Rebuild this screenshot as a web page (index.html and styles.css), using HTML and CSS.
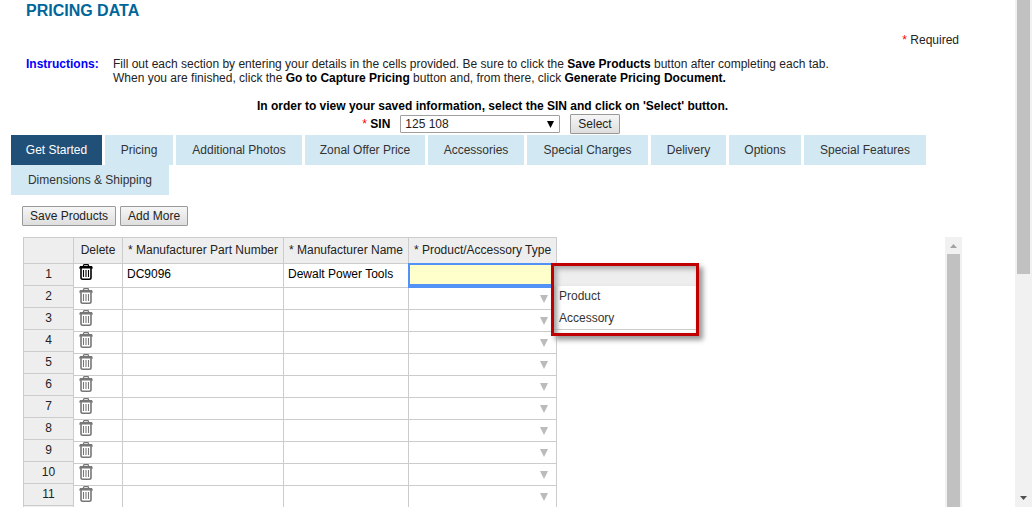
FILE: index.html
```html
<!DOCTYPE html>
<html lang="en">
<head>
<meta charset="utf-8">
<title>Pricing Data</title>
<link rel="stylesheet" href="styles.css">
</head>
<body>
<svg class="sprite" aria-hidden="true">
  <symbol id="trash" viewBox="0 0 14 16">
    <path d="M4.500 3V1.500Q4.500.7 5.300.7h3.400q.8 0 .8.8V3" fill="none" stroke="currentColor" stroke-width="1.300"/>
    <path d="M1 2h12l1 2.500H0z" fill="currentColor"/>
    <path d="M2 4v9.500q0 1.700 1.700 1.700h6.600q1.700 0 1.700-1.700V4" fill="none" stroke="currentColor" stroke-width="1.600"/>
    <path d="M4.500 6v7M7 6v7M9.500 6v7" stroke="currentColor" stroke-width="1.100"/>
  </symbol>
</svg>
<div class="page">
  <main class="main">
    <header class="intro">
      <h1 class="title">PRICING DATA</h1>
      <p class="required"><span class="star">*</span> Required</p>
      <div class="instructions">
        <strong class="instructions-label">Instructions:</strong>
        <p class="instructions-text">Fill out each section by entering your details in the cells provided. Be sure to click the <b>Save Products</b> button after completing each tab.<br>When you are finished, click the <b>Go to Capture Pricing</b> button and, from there, click <b>Generate Pricing Document.</b></p>
      </div>
      <p class="hint">In order to view your saved information, select the SIN and click on 'Select' button.</p>
      <form class="sin">
        <label class="sin-label" for="sin"><span class="star">*</span> SIN</label>
        <span class="select-wrap">
          <select class="select" id="sin"><option>125 108</option></select>
          <svg class="select-arrow" viewBox="0 0 7 7" aria-hidden="true"><path d="M0 0h7L3.5 7z"/></svg>
        </span>
        <button class="button" type="button">Select</button>
      </form>
    </header>
    <nav class="tabs">
      <a class="tab tab-active" href="#started">Get Started</a>
      <a class="tab" href="#pricing">Pricing</a>
      <a class="tab" href="#photos">Additional Photos</a>
      <a class="tab" href="#zonal">Zonal Offer Price</a>
      <a class="tab" href="#accessories">Accessories</a>
      <a class="tab" href="#charges">Special Charges</a>
      <a class="tab" href="#delivery">Delivery</a>
      <a class="tab" href="#options">Options</a>
      <a class="tab" href="#features">Special Features</a>
      <a class="tab" href="#shipping">Dimensions &amp; Shipping</a>
    </nav>
    <div class="actions">
      <button class="button" type="button">Save Products</button>
      <button class="button" type="button">Add More</button>
    </div>
    <section class="sheet">
      <table class="grid numbers">
        <thead><tr><th></th></tr></thead>
        <tbody id="numbers"></tbody>
      </table>
      <table class="grid data">
        <colgroup><col class="col-delete"><col class="col-part"><col class="col-name"><col class="col-type"></colgroup>
        <thead><tr><th>Delete</th><th>* Manufacturer Part Number</th><th>* Manufacturer Name</th><th>* Product/Accessory Type</th></tr></thead>
        <tbody id="rows">
          <tr class="first">
            <td><button class="trash trash-on" type="button" aria-label="Delete row 1"><svg class="icon"><use href="#trash"/></svg></button></td>
            <td>DC9096</td>
            <td>Dewalt Power Tools</td>
            <td class="type-cell">
              <input class="editor" type="text" aria-label="Product/Accessory Type">
              <ul class="menu">
                <li class="menu-item menu-current"></li>
                <li class="menu-item">Product</li>
                <li class="menu-item">Accessory</li>
              </ul>
            </td>
          </tr>
        </tbody>
      </table>
      <div class="scrollbar sheet-scroll" aria-hidden="true">
        <svg class="scroll-arrow arrow-light" viewBox="0 0 17 17"><path d="M5 11h7L8.500 7z"/></svg>
        <div class="thumb"></div>
      </div>
    </section>
  </main>
  <div class="scrollbar page-scroll" aria-hidden="true">
    <div class="thumb"></div>
    <div class="track"></div>
    <svg class="scroll-arrow arrow-dark" viewBox="0 0 17 17"><path d="M5 6h7L8.500 10z"/></svg>
  </div>
</div>
<script src="grid.js"></script>
</body>
</html>
```
FILE: styles.css
```css
* {
  box-sizing: border-box;
}

body {
  margin: 0;
  background: #fff;
  color: #222;
  font: 12px/14px "Liberation Sans", Arial, sans-serif;
}

p, h1, ul {
  margin: 0;
  padding: 0;
}

button, input, select {
  font: inherit;
  color: #222;
}

.sprite {
  display: none;
}

.page {
  display: flex;
  height: 100vh;
  overflow: hidden;
}

.main {
  flex: 1;
  min-width: 0;
  display: flex;
  flex-direction: column;
}

.intro {
  padding: 2px 56px 1px 26px;
}

.title {
  color: #069;
  font-size: 16px;
  line-height: 18px;
}

.required {
  margin-top: 13px;
  text-align: right;
}

.star {
  color: #f00;
  font-weight: normal;
}

.instructions {
  display: flex;
  margin-top: 10px;
}

.instructions-label {
  width: 87px;
  flex: none;
  color: #00f;
}

.instructions b,
.hint {
  color: #000;
}

.hint {
  margin-top: 14px;
  font-weight: bold;
  text-align: center;
}

.sin {
  display: flex;
  justify-content: center;
  align-items: center;
  gap: 10px;
  margin-top: 1px;
  padding-right: 3px;
}

.sin-label {
  color: #000;
  font-weight: bold;
}

.select-wrap {
  position: relative;
  display: flex;
}

.select {
  appearance: none;
  width: 160px;
  height: 18px;
  padding: 0 4px;
  border: 1px solid #a0a0a0;
  border-radius: 1px;
  background: #fff;
}

.select-arrow {
  position: absolute;
  top: 6px;
  right: 6px;
  width: 7px;
  height: 7px;
  pointer-events: none;
}

.button {
  height: 20px;
  padding: 0 7px;
  border: 1px solid #999;
  border-radius: 1px;
  background: linear-gradient(#f6f6f6, #dedede);
}

.tabs {
  display: flex;
  flex-wrap: wrap;
  column-gap: 3px;
  padding: 0 56px 0 11px;
}

.tab {
  background: #d2e8f3;
  color: #333;
  line-height: 30px;
  text-align: center;
  text-decoration: none;
}

.tab:nth-child(1) { width: 91px; }
.tab:nth-child(2) { width: 68px; }
.tab:nth-child(3) { width: 126px; }
.tab:nth-child(4) { width: 120px; }
.tab:nth-child(5) { width: 96px; }
.tab:nth-child(6) { width: 121px; }
.tab:nth-child(7) { width: 75px; }
.tab:nth-child(8) { width: 72px; }
.tab:nth-child(9) { width: 122px; }
.tab:nth-child(10) { width: 158px; }

.tab-active {
  background: #205078;
  color: #fff;
}

.actions {
  display: flex;
  gap: 4px;
  padding: 11px 22px;
}

.sheet {
  display: flex;
  flex: 1;
  min-height: 0;
  padding: 0 53px 0 23px;
}

.grid {
  align-self: flex-start;
  border-collapse: separate;
  border-spacing: 0;
  table-layout: fixed;
}

.numbers {
  width: 50px;
}

.data {
  width: 484px;
}

.col-delete { width: 50px; }
.col-part { width: 161px; }
.col-name { width: 125px; }
.col-type { width: 148px; }

.grid th,
.grid td {
  height: 22px;
  padding: 0 4px;
  border-right: 1px solid #ccc;
  border-bottom: 1px solid #ccc;
  font-weight: normal;
  line-height: 20px;
  text-align: left;
  vertical-align: top;
  white-space: nowrap;
}

.grid thead th {
  height: 27px;
  border-top: 1px solid #ccc;
  background: #eee;
  line-height: 25px;
}

.grid tbody th {
  background: #eee;
  text-align: center;
}

.numbers th,
.data tr > :first-child {
  border-left: 1px solid #ccc;
}

.grid.numbers th {
  border-right: 0;
}

.grid.data thead th {
  text-align: center;
}

.data .first td {
  height: 24px;
  color: #000;
}

.trash {
  display: block;
  width: 16px;
  height: 16px;
  padding: 0 1px;
  border: 0;
  background: none;
  color: #777;
}

.trash-on {
  color: #000;
}

.icon {
  display: block;
  width: 14px;
  height: 16px;
}

.grid .dropdown {
  padding-right: 8px;
  text-align: right;
}

.down {
  width: 8px;
  height: 8px;
  fill: #bbb;
  vertical-align: -1px;
}

.type-cell {
  position: relative;
}

.editor {
  position: absolute;
  top: -1px;
  left: -1px;
  width: 149px;
  height: 25px;
  border: 2px solid #5292f7;
  border-bottom-width: 4px;
  background: #ffc;
}

.menu {
  position: absolute;
  top: -1px;
  left: 142px;
  width: 148px;
  padding-bottom: 3px;
  border: 3px solid #c00000;
  background: linear-gradient(#ccc, #ccc) 0 100% / 100% 1px no-repeat content-box, #fff;
  box-shadow: 4px 4px 5px #999, inset 3px 3px 5px #999;
  color: #333;
  list-style: none;
}

.menu-item {
  height: 22px;
  padding: 0 5px;
}

.menu-current {
  height: 20px;
  background: #eee;
  box-shadow: inset 3px 3px 5px #aaa;
}

.scrollbar {
  display: flex;
  flex-direction: column;
  flex: none;
  width: 17px;
  background: #f1f1f1;
}

.sheet-scroll {
  margin-left: auto;
}

.thumb {
  flex: 1;
  margin: 0 2px;
  background: #c1c1c1;
}

.page-scroll .thumb {
  flex: 56;
}

.track {
  flex: 44;
}

.scroll-arrow {
  width: 17px;
  height: 17px;
}

.arrow-light {
  fill: #a3a3a3;
}

.arrow-dark {
  fill: #505050;
}
```
FILE: grid.js
```js
const rowCount = 11;
const numbers = document.getElementById('numbers');
const rows = document.getElementById('rows');

for (let n = 1; n <= rowCount; n++) {
  numbers.insertAdjacentHTML('beforeend', `<tr><th scope="row">${n}</th></tr>`);
  if (n > 1) {
    rows.insertAdjacentHTML('beforeend', `<tr>
      <td><button class="trash" type="button" aria-label="Delete row ${n}"><svg class="icon"><use href="#trash"/></svg></button></td>
      <td></td><td></td>
      <td class="dropdown"><svg class="down" viewBox="0 0 8 8"><path d="M0 0h8L4 8z"/></svg></td>
    </tr>`);
  }
}
// Blank filler row below the last numbered one.
numbers.insertAdjacentHTML('beforeend', '<tr><th></th></tr>');
```
